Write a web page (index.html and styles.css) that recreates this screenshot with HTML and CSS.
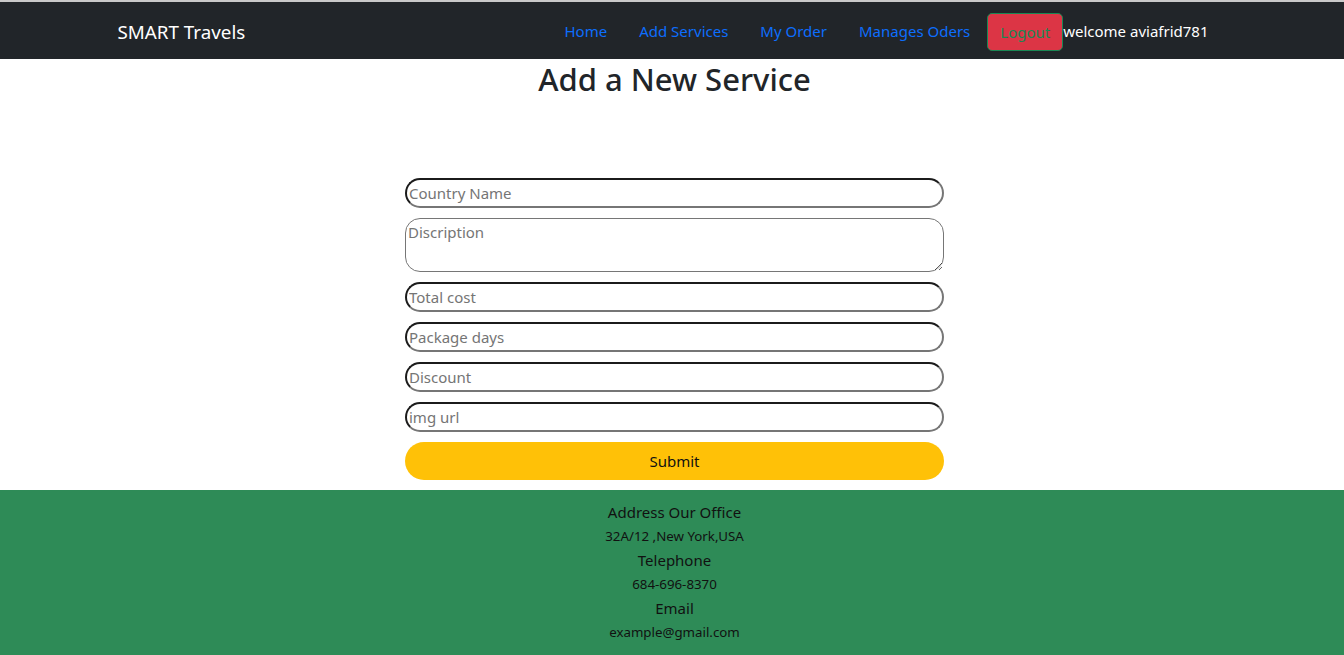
FILE: index.html
```html
<!DOCTYPE html>
<html lang="en">
<head>
<meta charset="utf-8">
<title>SMART Travels</title>
<link rel="stylesheet" href="styles.css">
</head>
<body>
<div class="topline"></div>
<nav class="navbar">
  <div class="nav-container">
    <a class="brand" href="#">SMART Travels</a>
    <div class="nav-right">
      <a class="nav-link" href="#">Home</a>
      <a class="nav-link" href="#">Add Services</a>
      <a class="nav-link" href="#">My Order</a>
      <a class="nav-link" href="#">Manages Oders</a>
      <button class="logout" type="button">Logout</button>
      <span class="welcome">welcome aviafrid781</span>
    </div>
  </div>
</nav>
<main class="page">
  <h2 class="title">Add a New Service</h2>
  <form class="service-form">
    <input class="field" type="text" placeholder="Country Name">
    <textarea class="field area" placeholder="Discription"></textarea>
    <input class="field" type="text" placeholder="Total cost">
    <input class="field" type="text" placeholder="Package days">
    <input class="field" type="text" placeholder="Discount">
    <input class="field" type="text" placeholder="img url">
    <button class="submit" type="button">Submit</button>
  </form>
</main>
<footer class="footer">
  <div class="footer-inner">
    <p class="f-head">Address Our Office</p>
    <p class="f-text">32A/12 ,New York,USA</p>
    <p class="f-head">Telephone</p>
    <p class="f-text">684-696-8370</p>
    <p class="f-head">Email</p>
    <p class="f-text">example@gmail.com</p>
  </div>
</footer>
</body>
</html>
```

FILE: styles.css
```css
* { box-sizing: border-box; }
html, body { margin: 0; padding: 0; }
body {
  font-family: "Noto Sans", "Open Sans", "Liberation Sans", sans-serif;
  font-size: 15px;
  color: #212529;
  background: #fff;
}
.topline { height: 2px; background: #c9c9c9; }
.navbar {
  background: #212529;
  height: 57px;
  padding-left: 5px;
  display: flex;
  align-items: center;
}
.nav-container {
  width: 1140px;
  margin: 0 auto;
  padding: 0 12px;
  display: flex;
  align-items: center;
  justify-content: space-between;
}
.brand {
  color: #fff;
  text-decoration: none;
  font-size: 18.8px;
  line-height: 30px;
  padding-left: 1px;
  margin-top: 2px;
}
.nav-right {
  display: flex;
  align-items: center;
  margin-right: 24px;
}
.nav-link {
  color: #0d6efd;
  text-decoration: none;
  padding: 8px 16px;
  line-height: 24px;
}
.logout {
  font-family: inherit;
  font-size: 15px;
  line-height: 24px;
  height: 38px;
  padding: 6px 12px;
  background: #dc3545;
  color: #198754;
  border: 1px solid #198754;
  border-radius: 5px;
  margin-left: 1px;
  margin-top: 2px;
}
.welcome { color: #fff; line-height: 24px; }
.page { padding-left: 5px; }
.title {
  margin: 0 0 79px;
  text-align: center;
  font-size: 31px;
  font-weight: 500;
  line-height: 40px;
}
.service-form {
  width: 539px;
  margin: 0 auto;
  display: flex;
  flex-direction: column;
  gap: 10px;
  padding-bottom: 10px;
}
.field {
  display: block;
  width: 100%;
  height: 30px;
  font-family: inherit;
  font-size: 15px;
  padding: 1px 2px;
  border-radius: 15px;
  border: 2px solid;
  border-color: #1b1b1b #767676 #767676 #1b1b1b;
  background: #fff;
  color: #212529;
}
.field::placeholder { color: #757575; }
.area {
  height: 54px;
  border: 1px solid #767676;
  padding: 3px 2px;
  resize: vertical;
}
.submit {
  height: 38px;
  width: 100%;
  border: none;
  border-radius: 19px;
  background: #ffc107;
  color: #111;
  font-family: inherit;
  font-size: 15px;
}
.footer {
  background: #2e8b57;
  padding: 10px 0 11px 5px;
  text-align: center;
  color: #111;
}
.footer-inner p { margin: 0; line-height: 24px; }
.f-head { font-size: 15px; }
.f-text { font-size: 13.3px; }
```
